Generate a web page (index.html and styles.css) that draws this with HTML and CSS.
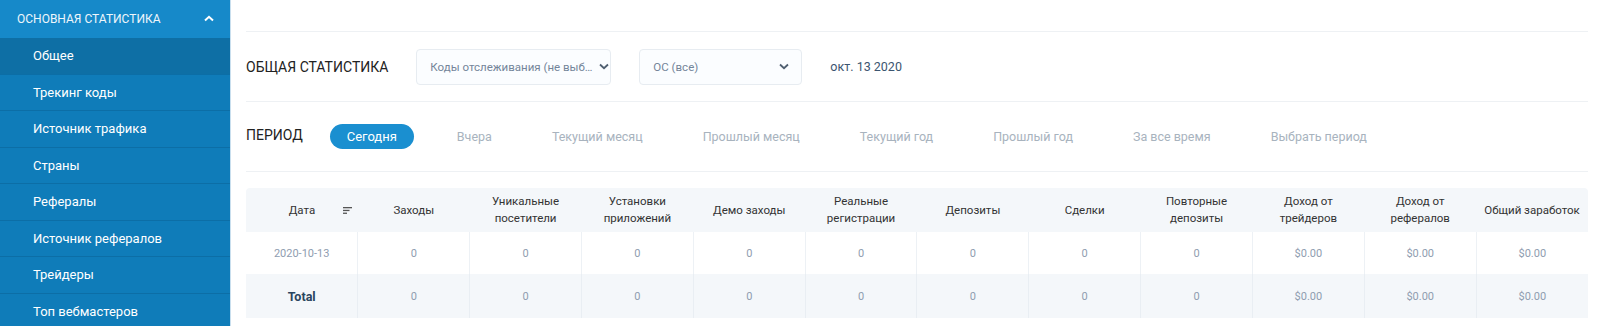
FILE: index.html
```html
<!DOCTYPE html>
<html lang="ru">
<head>
<meta charset="utf-8">
<title>Общая статистика</title>
<link rel="stylesheet" href="styles.css">
</head>
<body>
<div class="layout">
  <aside class="sidebar">
    <div class="side-head">
      <span class="side-title">Основная статистика</span>
      <svg class="chev-up" width="10" height="7" viewBox="0 0 10 7"><path d="M1 5.5 L5 1.8 L9 5.5" fill="none" stroke="#fff" stroke-width="2"/></svg>
    </div>
    <ul class="side-list">
      <li class="side-item active">Общее</li>
      <li class="side-item">Трекинг коды</li>
      <li class="side-item">Источник трафика</li>
      <li class="side-item">Страны</li>
      <li class="side-item">Рефералы</li>
      <li class="side-item">Источник рефералов</li>
      <li class="side-item">Трейдеры</li>
      <li class="side-item">Топ вебмастеров</li>
    </ul>
  </aside>
  <main class="main">
    <div class="topbar"></div>
    <div class="filters">
      <h1 class="title">Общая статистика</h1>
      <div class="select select-codes">
        <span class="select-text">Коды отслеживания (не выб…</span>
        <svg class="chev" width="10" height="7" viewBox="0 0 10 7"><path d="M1 1.5 L5 5.2 L9 1.5" fill="none" stroke="#4f5f70" stroke-width="1.8"/></svg>
      </div>
      <div class="select select-os">
        <span class="select-text">ОС (все)</span>
        <svg class="chev" width="10" height="7" viewBox="0 0 10 7"><path d="M1 1.5 L5 5.2 L9 1.5" fill="none" stroke="#4f5f70" stroke-width="1.8"/></svg>
      </div>
      <div class="date">окт. 13 2020</div>
    </div>
    <div class="period">
      <div class="period-label">Период</div>
      <div class="period-tabs">
        <span class="tab active">Сегодня</span>
        <span class="tab">Вчера</span>
        <span class="tab">Текущий месяц</span>
        <span class="tab">Прошлый месяц</span>
        <span class="tab">Текущий год</span>
        <span class="tab">Прошлый год</span>
        <span class="tab">За все время</span>
        <span class="tab">Выбрать период</span>
      </div>
    </div>
    <table class="stats">
      <thead>
        <tr>
          <th class="th-date">Дата
            <svg class="sort" width="9" height="7" viewBox="0 0 9 7"><rect x="0" y="0" width="9" height="1.3" fill="#555"/><rect x="0" y="2.8" width="6.5" height="1.3" fill="#555"/><rect x="0" y="5.6" width="4" height="1.3" fill="#555"/></svg>
          </th>
          <th>Заходы</th>
          <th>Уникальные<br>посетители</th>
          <th>Установки<br>приложений</th>
          <th>Демо заходы</th>
          <th>Реальные<br>регистрации</th>
          <th>Депозиты</th>
          <th>Сделки</th>
          <th>Повторные<br>депозиты</th>
          <th>Доход от<br>трейдеров</th>
          <th>Доход от<br>рефералов</th>
          <th>Общий заработок</th>
        </tr>
      </thead>
      <tbody>
        <tr class="row">
          <td>2020-10-13</td>
          <td>0</td><td>0</td><td>0</td><td>0</td><td>0</td><td>0</td><td>0</td><td>0</td>
          <td>$0.00</td><td>$0.00</td><td>$0.00</td>
        </tr>
        <tr class="total">
          <td class="total-label">Total</td>
          <td>0</td><td>0</td><td>0</td><td>0</td><td>0</td><td>0</td><td>0</td><td>0</td>
          <td>$0.00</td><td>$0.00</td><td>$0.00</td>
        </tr>
      </tbody>
    </table>
  </main>
</div>
</body>
</html>
```
FILE: styles.css
```css
* { box-sizing: border-box; }
html, body { margin: 0; padding: 0; background: #fff; }
body { font-family: Roboto, "Liberation Sans", Arial, sans-serif; }

.layout { display: flex; min-height: 326px; }

.sidebar {
  width: 231px;
  flex: 0 0 231px;
  background: #0f7cb9;
  border-right: 1px solid #c9dfee;
}
.side-head {
  height: 38px;
  background: #1689c9;
  display: flex;
  align-items: center;
  justify-content: space-between;
  padding: 0 16px 0 17px;
  color: #eef6fb;
  font-size: 12px;
  text-transform: uppercase;
}
.side-title { white-space: nowrap; }
.chev-up { margin-top: -2px; }
.side-list { list-style: none; margin: 0; padding: 0; }
.side-item {
  height: 36.5px;
  display: flex;
  align-items: center;
  padding-left: 33px;
  color: #fff;
  font-size: 13px;
  border-bottom: 1px solid #0c6ea6;
}
.side-item.active { background: #0e6fa5; }

.main { flex: 1; padding: 0 12px 0 15px; min-width: 0; }
.topbar { height: 32px; border-bottom: 1px solid #eef1f4; }

.filters {
  height: 70px;
  display: flex;
  align-items: center;
  gap: 28px;
  border-bottom: 1px solid #eef1f4;
}
.title {
  margin: 0;
  font-size: 14px;
  font-weight: 400;
  color: #222;
  text-transform: uppercase;
  white-space: nowrap;
}
.select {
  height: 36px;
  display: flex;
  align-items: center;
  justify-content: space-between;
  padding: 0 13px;
  border: 1px solid #e7ecf1;
  border-radius: 4px;
  background: #fbfdff;
  font-size: 11.5px;
  color: #74859a;
}
.select-codes { width: 195px; }
.select-os { width: 163px; padding-right: 12px; }
.select-text { white-space: nowrap; }
.chev { flex: 0 0 auto; margin-left: 6px; }
.date { font-size: 12.5px; color: #3c5570; }

.period {
  height: 70px;
  display: flex;
  align-items: center;
  gap: 27px;
  border-bottom: 1px solid #eef1f4;
}
.period-label { font-size: 14px; color: #222; text-transform: uppercase; margin-top: -3px; }
.period-tabs { display: flex; align-items: center; gap: 26px; }
.tab {
  height: 25px;
  display: flex;
  align-items: center;
  padding: 0 17px;
  border-radius: 13px;
  font-size: 12.5px;
  color: #a8b3be;
}
.tab.active { background: #1a8fd0; color: #fff; font-size: 13px; }

.stats {
  width: 100%;
  margin-top: 16px;
  border-collapse: collapse;
  table-layout: fixed;
  font-size: 11px;
}
.stats th {
  height: 44px;
  background: #f4f7fa;
  color: #333;
  font-weight: 400;
  font-size: 11.5px;
  line-height: 17px;
  text-align: center;
  vertical-align: middle;
  padding: 0 4px;
}
.th-date { position: relative; }
.sort { position: absolute; right: 6px; top: 19px; }
.stats td {
  text-align: center;
  vertical-align: middle;
  color: #8f9db0;
  border-left: 1px solid #edf1f5;
}
.stats td:first-child { border-left: none; }
.row td { height: 42px; background: #fff; }
.total td { height: 44px; background: #f4f7fa; border-left-color: #e9eef3; }
.total td.total-label { font-weight: 700; color: #2b4560; font-size: 12.5px; }
.stats thead tr th:first-child { border-top-left-radius: 4px; }
.stats thead tr th:last-child { border-top-right-radius: 4px; }
```
